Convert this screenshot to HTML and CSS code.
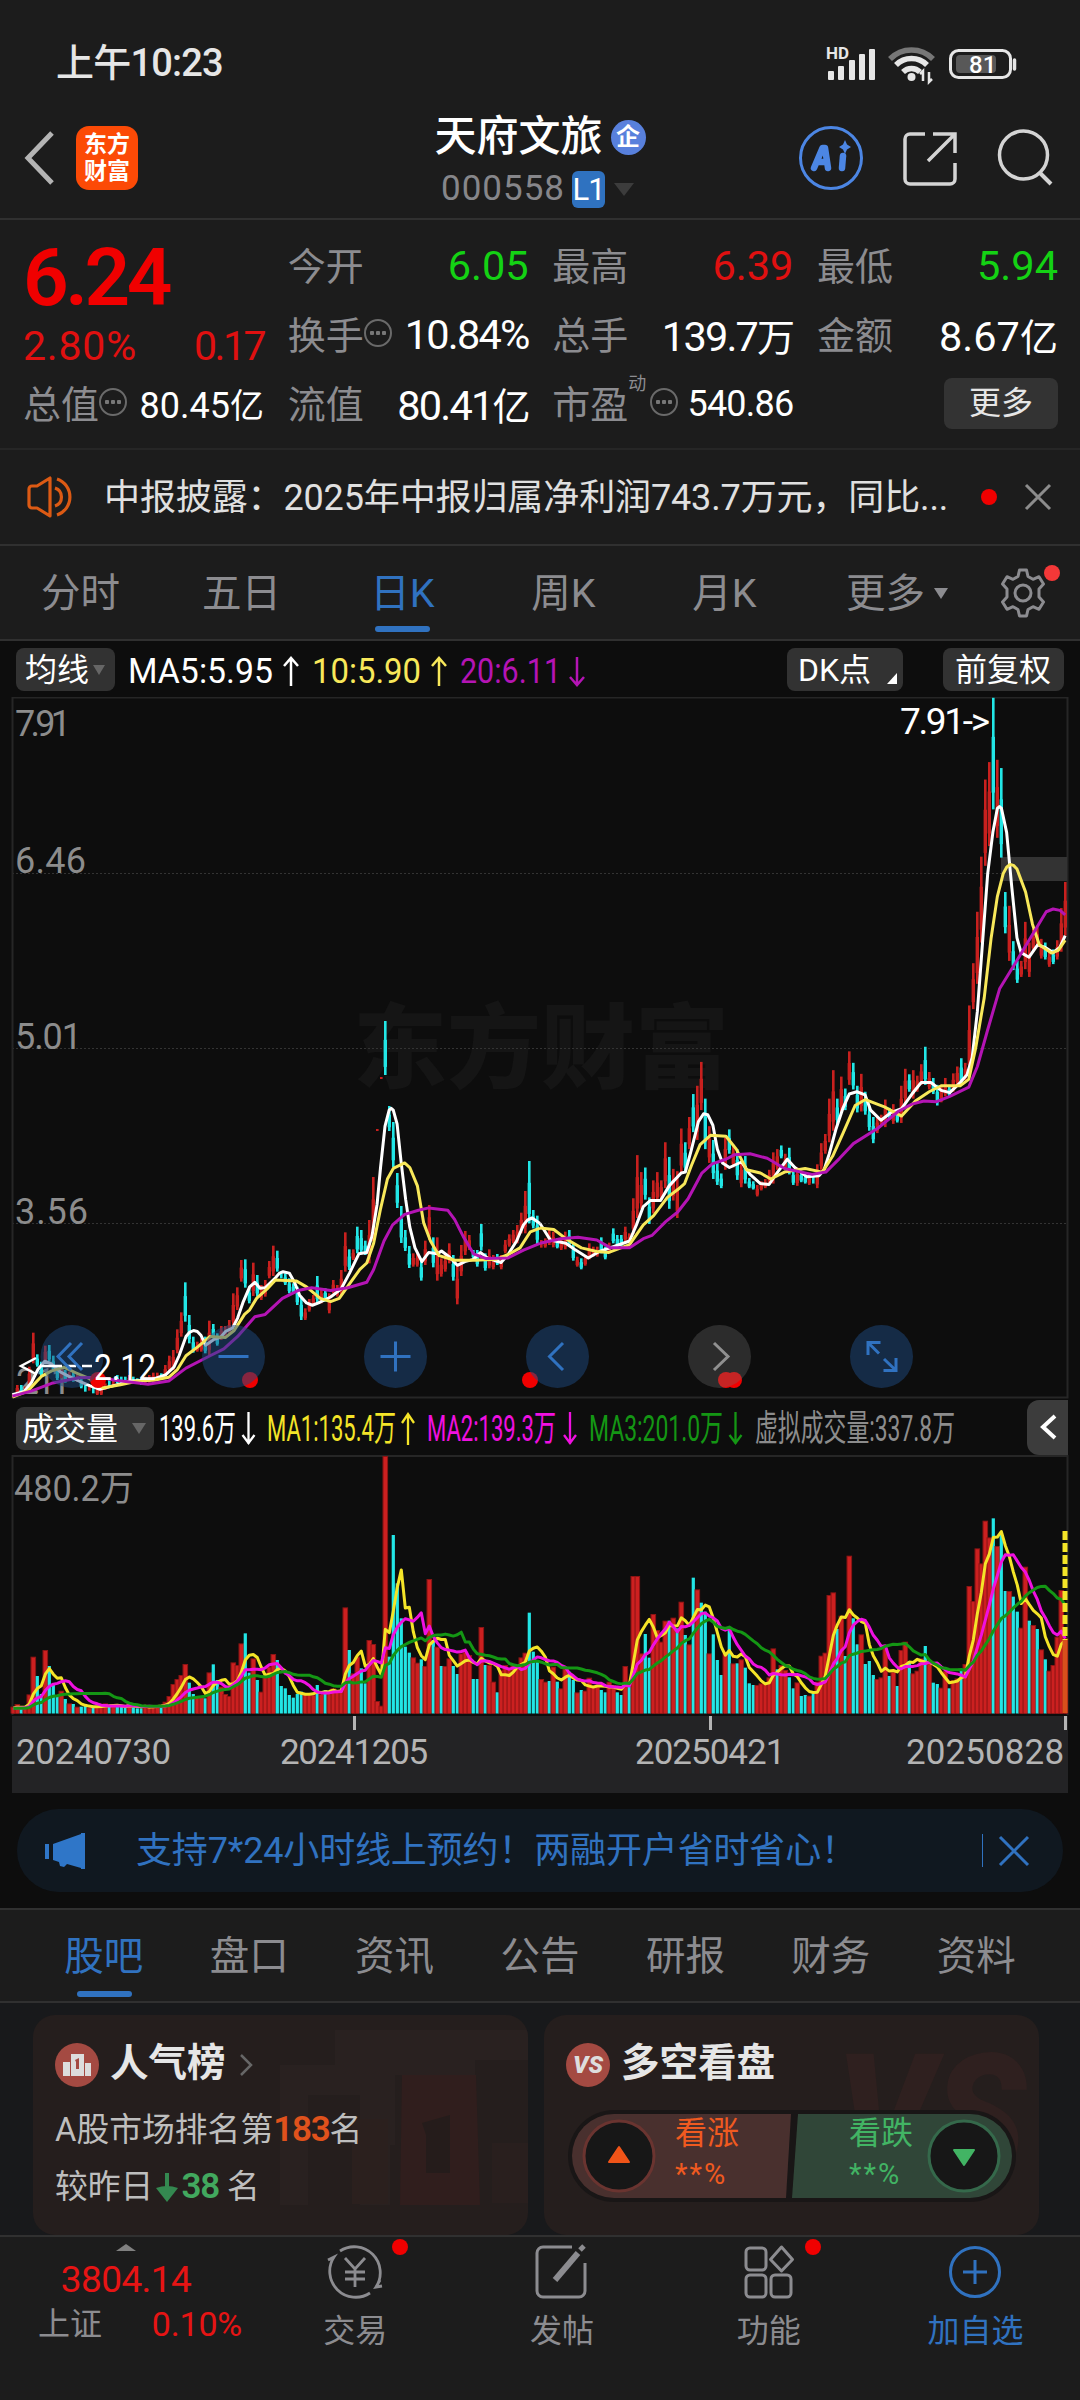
FILE: index.html
```html
<!DOCTYPE html>
<html lang="zh-CN">
<head>
<meta charset="utf-8">
<title>天府文旅 000558</title>
<link rel="stylesheet" href="styles.css">
</head>
<body>
<div class="app">
  <div class="status">
    <span class="clock">上午10:23</span>
    <svg class="status-icons" width="200" height="50" viewBox="0 0 200 50">
      <text x="2" y="18" class="hd" textLength="23" lengthAdjust="spacingAndGlyphs">HD</text>
      <g fill="#e6e6e6"><rect x="4" y="30" width="6" height="9" rx="1"/><rect x="14" y="25" width="6" height="14" rx="1"/><rect x="25" y="19" width="6" height="20" rx="1"/><rect x="35" y="13" width="6" height="26" rx="1"/><rect x="45" y="8" width="6" height="31" rx="1"/></g>
      <g fill="none" stroke="#e6e6e6" stroke-width="5.5"><path d="M66 18a30 30 0 0 1 43 0" stroke="#777"/><path d="M72 24a22 22 0 0 1 31 0"/><path d="M79 31a12 12 0 0 1 17 0"/></g>
      <circle cx="87.500" cy="36" r="4" fill="#e6e6e6"/>
      <path d="M99 40V30l-3 3M105 31v10l3-3" stroke="#e6e6e6" stroke-width="2.500" fill="none"/>
      <rect x="126.500" y="9.500" width="60" height="27" rx="8" fill="none" stroke="#e6e6e6" stroke-width="3"/>
      <rect x="132" y="14" width="40" height="18" rx="4" fill="#585858"/>
      <path d="M190.500 19v9" stroke="#e6e6e6" stroke-width="3.500" stroke-linecap="round"/>
      <text x="145" y="32" class="batt">81</text>
    </svg>
  </div>

  <header class="header">
    <div class="head-left">
      <svg width="40" height="60" viewBox="0 0 40 60"><path d="M31 5 7 30l24 25" fill="none" stroke="#b4b4b4" stroke-width="5"/></svg>
      <div class="logo"><span>东方</span><span>财富</span></div>
    </div>
    <div class="head-mid">
      <div class="name">天府文旅<span class="qi">企</span></div>
      <div class="code">000558<span class="lv">L1</span><i class="tri"></i></div>
    </div>
    <div class="head-right">
      <svg width="260" height="68" viewBox="0 0 260 68" fill="none">
        <circle cx="34" cy="34" r="30.500" stroke="#4c86e4" stroke-width="3"/>
        <path d="M17 44 25.500 24h2.500L31 44M20 38h10" stroke="#4c86e4" stroke-width="6.500" stroke-linejoin="round" stroke-linecap="round"/>
        <path d="M46 32 45 44" stroke="#4c86e4" stroke-width="6.500" stroke-linecap="round"/>
        <path d="m48 16 2 4.500L54 23l-4 2.500-2 4.500-2-4.500L42 23l4-2.500z" fill="#4c86e4"/>
        <path d="M128 10h-15a5 5 0 0 0-5 5v40a5 5 0 0 0 5 5h40a5 5 0 0 0 5-5V39M136 10h22v19M157 11 131 37" stroke="#d4d4d4" stroke-width="3.500"/>
        <circle cx="226.500" cy="31" r="24" stroke="#d4d4d4" stroke-width="3.500"/><path d="m242 48 12 12" stroke="#d4d4d4" stroke-width="4"/>
      </svg>
    </div>
  </header>

  <section class="quote">
    <div class="q-main">
      <div class="price">6.24</div>
      <div class="change"><span class="pct">2.80%</span><span class="abs">0.17</span></div>
    </div>
    <div class="q"><label>今开</label><b class="dn">6.05</b></div>
    <div class="q"><label>最高</label><b class="up">6.39</b></div>
    <div class="q"><label>最低</label><b class="dn">5.94</b></div>
    <div class="q"><label>换手<i class="more-dot"></i></label><b class="tight">10.84%</b></div>
    <div class="q"><label>总手</label><b class="tight">139.7<em>万</em></b></div>
    <div class="q"><label>金额</label><b>8.67<em>亿</em></b></div>
    <div class="q"><label>总值<i class="more-dot"></i></label><b class="sm">80.45<em>亿</em></b></div>
    <div class="q"><label>流值</label><b class="tight">80.41<em>亿</em></b></div>
    <div class="q"><label>市盈<sup>动</sup><i class="more-dot"></i></label><b class="sm pe">540.86</b></div>
    <div class="q end"><span class="btn-more">更多</span></div>
  </section>

  <section class="news">
    <svg width="50" height="44" viewBox="0 0 50 44" fill="none" stroke="#dc5a14" stroke-width="3.200" stroke-linejoin="round"><path d="M23 3v38L10 33H5a3 3 0 0 1-3-3V14a3 3 0 0 1 3-3h5z"/><path d="M28 13a9.500 9.500 0 0 1 0 18M30 4a19 19 0 0 1 0 36"/></svg>
    <p>中报披露：2025年中报归属净利润743.7万元，同比...</p>
    <i class="dot"></i>
    <svg width="28" height="28" viewBox="0 0 28 28"><path d="m2 2 24 24M26 2 2 26" stroke="#8c8c8c" stroke-width="3"/></svg>
  </section>

  <nav class="periods">
    <span>分时</span><span>五日</span><span class="on">日K</span><span>周K</span><span>月K</span><span>更多<i></i></span>
    <div class="gear">
      <svg width="50" height="50" viewBox="0 0 50 50" fill="none" stroke="#8c8c90" stroke-width="3"><path d="M21.500 2h7l1.500 6.500 5 2.800 6-2.600 4.500 7.300-4.500 5v8l4.500 5-4.500 7.300-6-2.600-5 2.800-1.500 6.500h-7L20 41.500l-5-2.800-6 2.600L4.500 34 9 29v-8l-4.500-5L9 8.700l6 2.600 5-2.800z" stroke-linejoin="round"/><circle cx="25" cy="25" r="8"/></svg>
      <i class="badge"></i>
    </div>
  </nav>

  <section class="chart">
    <div class="ma-row">
      <span class="chip">均线<i class="tri"></i></span>
      <svg class="ma-vals" width="480" height="44" viewBox="0 0 480 44">
        <g font-size="35"><text x="0" y="35" fill="#fff" textLength="145" lengthAdjust="spacingAndGlyphs">MA5:5.95</text>
        <text x="184" y="35" fill="#f8e85a" textLength="109" lengthAdjust="spacingAndGlyphs">10:5.90</text>
        <text x="332" y="35" fill="#b414b4" textLength="101" lengthAdjust="spacingAndGlyphs">20:6.11</text></g>
        <g fill="none" stroke-width="2.500"><path d="M163 38V10m-7 8 7-8 7 8" stroke="#fff"/><path d="M311 38V10m-7 8 7-8 7 8" stroke="#f8e85a"/><path d="M449 9v28m-7-8 7 8 7-8" stroke="#b414b4"/></g>
      </svg>
      <span class="chip dk">DK点<i></i></span>
      <span class="chip fq">前复权</span>
    </div>

    <svg id="kline" width="1080" height="702" viewBox="0 697 1080 702">
      <text class="water" x="353" y="1081" textLength="376" lengthAdjust="spacingAndGlyphs">东方财富</text>
      <g stroke="#333" stroke-dasharray="2 2"><path d="M12 873.500H1067M12 1048.500H1067M12 1223.500H1067"/></g>
      <path d="M12.500 697.500H1067.500V1397.500H12.500z" fill="none" stroke="#262626" stroke-width="2"/>
      <rect x="1001" y="857" width="66" height="24" fill="#333"/>
      <g class="axis"><text x="15" y="736" textLength="56">7.91</text><text x="15" y="873" textLength="71">6.46</text><text x="15" y="1049" textLength="67">5.01</text><text x="15" y="1224" textLength="73">3.56</text><text x="16" y="1394" textLength="55">2.11</text></g>
      <g id="candles"></g>
      <g class="line" transform="translate(0 690) scale(.34438 .45914)">
        <polyline stroke="#fff" points="36,1535 70,1528 90,1510 110,1480 130,1462 150,1468 175,1485 200,1495 230,1505 260,1515 290,1523 330,1515 380,1505 440,1502 480,1492 505,1475 520,1450 540,1408 550,1399 562,1395 573,1397 584,1406 597,1427 620,1415 640,1410 655,1397 675,1390 690,1368 705,1335 725,1300 740,1290 755,1303 770,1302 800,1280 812,1270 822,1267 840,1270 855,1290 870,1318 890,1335 907,1340 925,1335 960,1322 990,1305 1015,1270 1042,1228 1065,1225 1080,1190 1095,1120 1105,1040 1118,950 1130,915 1136,911 1142,915 1153,945 1165,1030 1178,1110 1190,1170 1205,1215 1225,1245 1245,1225 1270,1228 1282,1222 1305,1235 1328,1253 1350,1245 1375,1240 1395,1225 1415,1237 1455,1247 1475,1230 1500,1200 1520,1165 1532,1154 1545,1150 1568,1162"/>
        <polyline stroke="#f8e85a" points="36,1540 80,1527 120,1495 150,1483 185,1475 220,1487 260,1500 300,1520 350,1513 400,1505 450,1503 490,1497 515,1480 540,1450 575,1430 610,1408 655,1410 680,1395 710,1360 725,1350 745,1325 775,1305 800,1285 860,1287 890,1300 930,1325 960,1332 985,1325 1020,1288 1045,1262 1065,1248 1085,1205 1105,1130 1125,1065 1142,1042 1175,1030 1190,1040 1212,1080 1230,1160 1250,1200 1275,1232 1320,1242 1380,1242 1440,1240 1480,1228 1510,1215 1540,1180 1568,1172"/>
        <polyline stroke="#b414b4" points="36,1538 90,1527 150,1510 230,1498 290,1497 330,1503 430,1512 490,1505 540,1477 610,1450 650,1435 690,1408 740,1365 770,1360 820,1325 865,1308 905,1302 960,1308 1010,1302 1065,1290 1085,1262 1115,1200 1140,1165 1175,1142 1215,1133 1245,1128 1300,1133 1320,1153 1345,1190 1375,1228 1410,1238 1475,1237 1520,1220 1568,1205"/>
      </g>
      <g class="line" transform="translate(540 690) scale(.34438 .45914)">
        <polyline stroke="#fff" points="0,1162 30,1198 75,1205 100,1218 140,1237 175,1222 215,1212 260,1200 280,1165 300,1125 320,1112 350,1112 375,1080 410,1052 422,1050 440,1000 460,940 475,923 487,925 502,948 515,1000 530,1030 550,1040 585,1028 610,1055 640,1075 665,1077 690,1050 718,1022 740,1040 775,1060 810,1058 825,1045 840,1010 860,955 880,910 898,880 920,875 944,882 960,915 990,937 1020,920 1050,912 1080,880 1107,855 1135,855 1165,872 1190,877 1220,855 1240,838 1255,800 1270,700 1285,550 1300,400 1315,310 1328,258 1334,254 1340,258 1355,310 1370,430 1385,540 1397,572 1420,582 1445,555 1465,560 1490,572 1510,560 1525,535"/>
        <polyline stroke="#f8e85a" points="0,1172 40,1175 75,1195 120,1215 165,1223 200,1225 260,1208 300,1165 330,1145 370,1105 400,1088 420,1075 440,1035 465,990 495,970 540,972 570,1000 600,1045 640,1052 670,1065 710,1050 770,1042 820,1050 850,1015 880,965 915,905 945,892 1000,908 1050,928 1090,895 1130,875 1165,862 1220,862 1245,848 1265,780 1290,670 1310,540 1328,450 1345,400 1355,386 1365,380 1375,382 1385,390 1410,440 1430,510 1450,555 1485,573 1505,567 1525,545"/>
        <polyline stroke="#b414b4" points="0,1205 60,1195 110,1192 165,1198 205,1215 260,1215 300,1195 325,1188 365,1158 400,1137 430,1108 470,1052 500,1032 540,1022 565,1012 610,1010 660,1020 710,1042 790,1055 830,1050 870,1020 910,988 980,955 1040,918 1080,902 1115,895 1150,897 1190,885 1245,865 1270,820 1300,740 1335,650 1380,595 1420,545 1470,483 1490,477 1510,480 1525,490"/>
      </g>
      <g fill="#f00000"><circle cx="98" cy="1380" r="8"/><circle cx="250" cy="1380" r="8"/><circle cx="530" cy="1380" r="8"/><circle cx="726" cy="1380" r="8"/><circle cx="734" cy="1380" r="8"/></g>
      <g fill="#1e4a80" fill-opacity=".5"><circle cx="72" cy="1356.500" r="31.500"/><circle cx="233.500" cy="1356.500" r="31.500"/><circle cx="395.500" cy="1356.500" r="31.500"/><circle cx="557.500" cy="1356.500" r="31.500"/><circle cx="881.500" cy="1356.500" r="31.500"/></g>
      <circle cx="719.500" cy="1356.500" r="31.500" fill="#6e6e6e" fill-opacity=".33"/>
      <text class="mark" x="94" y="1380" textLength="62" lengthAdjust="spacingAndGlyphs">2.12</text>
      <path d="M36 1358 21 1366l15 8M42 1366H62M66 1366h10M82 1366h10" fill="none" stroke="#fff" stroke-width="2.500"/>
      <g fill="none" stroke="#3072c0" stroke-width="3"><path d="m71 1343-13 13.500 13 13.500M82 1343l-13 13.500 13 13.500M218.500 1356.500h30M380.500 1356.500h30M395.500 1341.500v30M563 1343l-13.500 13.500 13.500 13.500"/><path d="M868 1355v-12.500h12.500M868 1342.500l11 11M896 1358v12.500h-12.500M896 1370.500l-12-11.500"/></g>
      <path d="m714 1343 14 13.500-14 13.500" fill="none" stroke="#909090" stroke-width="3"/>
      <text class="mark" x="900" y="734" textLength="90">7.91-&gt;</text>
    </svg>

    <div class="vol-head">
      <span class="chip vol">成交量<i class="tri"></i></span>
      <svg width="800" height="50" viewBox="158 1402 800 50">
        <g font-size="36"><text x="159" y="1441" fill="#fff" textLength="77" lengthAdjust="spacingAndGlyphs">139.6万</text>
        <text x="267" y="1441" fill="#f4e428" textLength="129" lengthAdjust="spacingAndGlyphs">MA1:135.4万</text>
        <text x="427" y="1441" fill="#f010e0" textLength="129" lengthAdjust="spacingAndGlyphs">MA2:139.3万</text>
        <text x="589" y="1441" fill="#149614" textLength="134" lengthAdjust="spacingAndGlyphs">MA3:201.0万</text>
        <text x="755" y="1441" fill="#8c8c8c" textLength="200" lengthAdjust="spacingAndGlyphs">虚拟成交量:337.8万</text></g>
        <g fill="none" stroke-width="2.300"><path d="M248.500 1412v32m-6-9 6 8 6-8" stroke="#fff"/><path d="M408 1445v-31m-6 9 6-9 6 9" stroke="#f4e428"/><path d="M570 1412v32m-6-9 6 8 6-8" stroke="#f010e0"/><path d="M735.500 1412v32m-6-9 6 8 6-8" stroke="#149614"/></g>
      </svg>
      <span class="fold"><svg width="20" height="28" viewBox="0 0 20 28"><path d="M16 3 4 14l12 11" fill="none" stroke="#fff" stroke-width="4"/></svg></span>
    </div>

    <svg id="volume" width="1080" height="260" viewBox="0 1455 1080 260">
      <path d="M12.500 1715V1456H1067.500V1715" fill="none" stroke="#262626" stroke-width="2"/>
      <text class="axis" x="14" y="1501" textLength="120" lengthAdjust="spacingAndGlyphs">480.2万</text>
      <g id="bars"></g><g id="vma" class="line"></g>
      <path d="M1065 1531V1640" stroke="#f4e428" stroke-width="5" stroke-dasharray="9 3"/>
      <path d="M1065 1640V1713" stroke="#d8501c" stroke-width="5"/>
    </svg>
    <div class="dates"><span>20240730</span><span>20241205</span><span>20250421</span><span>20250828</span></div>
  </section>

  <div class="promo">
    <svg width="46" height="40" viewBox="0 0 46 40" fill="#2f76c8"><path d="M3 13h4v15H3zM11 13 39 3V2h4v36h-4v-1l-14-4-3 3-4-1-1-4-6-2z"/></svg>
    <p>支持7*24小时线上预约！两融开户省时省心！</p>
    <i></i>
    <svg width="32" height="32" viewBox="0 0 32 32"><path d="m2 2 28 28M30 2 2 30" stroke="#3072c0" stroke-width="3"/></svg>
  </div>

  <nav class="tabs"><span class="on">股吧</span><span>盘口</span><span>资讯</span><span>公告</span><span>研报</span><span>财务</span><span>资料</span></nav>

  <section class="cards">
    <article class="card">
      <svg class="deco" width="248" height="190" viewBox="0 0 248 190"><path d="M0 40h55v-35h193v30H110v145H80V70H28v110H0zM90 20h105v30h-80v70H90z" fill="#292120"/><path d="M72 94h36v85H72z" fill="#2b201e"/><path d="M122 50h74l4 130h-80z" fill="#301e1d"/><path d="M212 118h36v60h-36z" fill="#291f1e"/><path d="m142 98 28-8v58h-24v-38z" fill="#251c1b"/></svg>
      <h3><svg width="44" height="44" viewBox="0 0 44 44"><circle cx="22" cy="22" r="22" fill="#a44a42"/><path d="M8 19h7v14H8zM16 11h13v22H16zM30 20h6v13h-6z" fill="#ddd"/><path d="m20 17 4-2v11h-3v-7z" fill="#a44a42"/></svg><span>人气榜</span><svg width="16" height="24" viewBox="0 0 16 24"><path d="m3 2 10 10L3 22" fill="none" stroke="#666" stroke-width="2.500"/></svg></h3>
      <p>A股市场排名第<b class="hot">183</b>名</p>
      <p>较昨日<svg width="24" height="32" viewBox="0 0 24 32"><path d="M12 2v20" stroke="#348850" stroke-width="4"/><path d="M1 17q11-4 22 0L12 31z" fill="#348850"/></svg><b class="cool">38</b> 名</p>
    </article>
    <article class="card">
      <svg class="deco" width="248" height="190" viewBox="0 0 248 190"><text x="45" y="150" class="vs-bg" textLength="190" lengthAdjust="spacingAndGlyphs">VS</text></svg>
      <h3><span class="vs">VS</span><span>多空看盘</span></h3>
      <div class="battle">
        <svg width="450" height="94" viewBox="0 0 450 94">
          <rect x="1" y="1" width="448" height="92" rx="46" fill="#191616"/>
          <path d="M47 5H224L219 89H47a42 42 0 0 1 0-84z" fill="#49302e"/><path d="M231 5H403a42 42 0 0 1 0 84H225z" fill="#304638"/>
          <circle cx="52" cy="47" r="35" fill="#171717" stroke="#6a3430" stroke-width="3"/><circle cx="397" cy="47" r="35" fill="#171717" stroke="#35694b" stroke-width="3"/>
          <path d="m52 38 10 15H42z" fill="#f05418" stroke="#f05418" stroke-width="2" stroke-linejoin="round"/><path d="m397 56-10-15h20z" fill="#42b464" stroke="#42b464" stroke-width="2" stroke-linejoin="round"/>
        </svg>
        <div class="side bull"><span>看涨</span><span>**%</span></div>
        <div class="side bear"><span>看跌</span><span>**%</span></div>
      </div>
    </article>
  </section>

  <footer class="bottom">
    <div class="index"><i></i><strong>3804.14</strong><p><span>上证</span><b>0.10%</b></p></div>
    <div class="act"><svg width="64" height="56" viewBox="0 0 64 56" fill="none" stroke="#8c8c90" stroke-width="2.800"><path d="M17 7A26 26 0 0 1 53 43l6-1M47 49A26 26 0 0 1 11 13l-6 3M22 14l10 11 10-11M32 25v18M22 28h20M22 35h20M57 36l-4 7"/></svg><span>交易</span><i class="badge"></i></div>
    <div class="act"><svg width="64" height="56" viewBox="0 0 64 56" fill="none" stroke="#8c8c90" stroke-width="3"><path d="M42 3H13a6 6 0 0 0-6 6v38a6 6 0 0 0 6 6h36a6 6 0 0 0 6-6V19"/><path d="M25 36 48 9" stroke-width="6"/><path d="m50 6 4-4" stroke-width="5"/></svg><span>发帖</span></div>
    <div class="act"><svg width="64" height="56" viewBox="0 0 64 56" fill="none" stroke="#8c8c90" stroke-width="3"><rect x="9" y="4" width="20" height="22" rx="4"/><rect x="9" y="31" width="20" height="22" rx="4"/><rect x="34" y="31" width="20" height="22" rx="4"/><path d="m44.500 3 11 12.500-11 11.500-11-11.500z" stroke-linejoin="round"/></svg><span>功能</span><i class="badge"></i></div>
    <div class="act add"><svg width="64" height="56" viewBox="0 0 64 56" fill="none" stroke="#3072c0" stroke-width="3"><circle cx="32" cy="28" r="24.500"/><path d="M20 28h24M32 16v24"/></svg><span>加自选</span></div>
  </footer>
</div>
<script src="chart.js"></script>
</body>
</html>
```
FILE: styles.css
```css
* { box-sizing: border-box; }
body { margin: 0; background: #1c1c1c; color: #fff; font-family: Roboto, "Noto Sans CJK SC", sans-serif; }
p, h3 { margin: 0; font-weight: 400; }
i, em { font-style: normal; }
svg { display: block; flex: none; }
.app { width: 1080px; height: 2400px; overflow: hidden; display: flex; flex-direction: column; }
.app > * { flex: none; }
.tri { border: 10px solid transparent; border-top: 13px solid #3c3c3c; border-bottom: 0; }

.status { height: 110px; padding: 38px 56px 0 56px; display: flex; justify-content: space-between; color: #e6e6e6; }
.clock { font-size: 38px; line-height: 50px; font-weight: 500; letter-spacing: -.8px; }
.status-icons { margin-top: 3px; }
.hd { font-size: 17px; font-weight: 700; fill: #e6e6e6; }
.batt { font-size: 24px; font-weight: 500; fill: #fff; }

.header { height: 110px; border-bottom: 2px solid #303030; display: grid; grid-template-columns: 350px 380px 350px; }
.head-left { display: flex; align-items: center; padding-left: 21px; gap: 15px; height: 96px; }
.logo { width: 62px; height: 64px; border-radius: 13px; background: #fc4a06; display: flex; flex-direction: column; align-items: center; justify-content: center; font-size: 23px; line-height: 27px; font-weight: 700; }
.head-mid { display: flex; flex-direction: column; align-items: center; padding-top: 3px; }
.name { font-size: 42px; line-height: 48px; font-weight: 500; display: flex; align-items: center; gap: 8px; }
.qi { width: 35px; height: 35px; border-radius: 50%; background: #5880dc; font-size: 24px; line-height: 34px; text-align: center; font-weight: 700; }
.code { color: #86868a; font-size: 35px; line-height: 40px; letter-spacing: 1px; display: flex; align-items: center; margin: 8px 5px 0 0; }
.lv { background: #2f72c0; color: #fff; width: 33px; height: 37px; border-radius: 6px; font-size: 31px; line-height: 37px; margin: 0 9px 0 7px; text-align: center; letter-spacing: -1px; }
.head-right { padding: 14px 0 0 67px; }

.quote { height: 230px; border-bottom: 2px solid #262626; padding: 11px 22px 0 23px; display: grid; grid-template-columns: repeat(4, 241px); grid-template-rows: 69px 69px 69px; justify-content: space-between; }
.q-main { grid-row: 1 / 3; color: #f00000; }
.price { font-size: 80px; line-height: 88px; font-weight: 600; letter-spacing: -3.500px; padding-top: 3px; }
.change { display: flex; justify-content: space-between; font-size: 41px; line-height: 46px; color: #e01010; padding-top: 1px; }
.pct { letter-spacing: .8px; }
.abs { letter-spacing: -2.500px; }
.q { display: flex; justify-content: space-between; align-items: center; white-space: nowrap; }
.q label { font-size: 38px; color: #8c8c90; display: flex; align-items: center; position: relative; top: -2px; }
.q b { font-weight: 400; font-size: 41.500px; }
.q em { font-size: 38px; }
.q b.tight { letter-spacing: -1.800px; }
.q b.sm { font-size: 36px; }
.q b.sm em { font-size: 34px; }
.q b.pe { letter-spacing: -.8px; }
.q .up { color: #e01010; }
.q .dn { color: #14d214; }
.q sup { font-size: 18px; line-height: 20px; align-self: flex-start; margin-right: -14px; }
.q.end { justify-content: flex-end; }
.more-dot { width: 28px; height: 28px; border: 2.500px solid #6a6a6a; border-radius: 50%; display: inline-block; background: radial-gradient(circle at 6px 12px, #777 2px, transparent 2.500px), radial-gradient(circle at 12px 12px, #777 2px, transparent 2.500px), radial-gradient(circle at 18px 12px, #777 2px, transparent 2.500px); }
.q sup + .more-dot { margin-left: 18px; }
.btn-more { width: 114px; height: 51px; border-radius: 8px; background: #333; font-size: 32px; line-height: 50px; text-align: center; color: #e6e6e6; }

.news { height: 96px; border-bottom: 2px solid #303030; display: flex; align-items: center; padding-left: 27px; }
.news p { font-size: 36px; line-height: 50px; color: #e0e0e0; width: 848px; margin: 2px 0 0 27px; white-space: nowrap; letter-spacing: -.12px; }
.dot { width: 16px; height: 16px; border-radius: 50%; background: #f00000; margin: 0 27px 0 29px; }

.periods { height: 95px; border-bottom: 2px solid #303030; display: flex; color: #8c8c90; font-size: 39.500px; }
.periods > span { width: 161px; text-align: center; line-height: 96px; position: relative; }
.periods .on, .tabs .on { color: #3072c0; }
.periods .on::after { content: ""; position: absolute; left: 53px; bottom: 7px; width: 55px; height: 6px; border-radius: 3px; background: #3072c0; }
.periods span i { position: absolute; left: 129px; top: 42px; border: 7px solid transparent; border-top: 11px solid #8c8c90; border-bottom: 0; }
.gear { padding: 22px 0 0 32px; position: relative; }
.badge { position: absolute; width: 16px; height: 16px; border-radius: 50%; background: #f00000; }
.gear .badge { left: 78px; top: 19px; background: #f43838; }

.chart { background: #0d0d0d; }
.ma-row { height: 56px; display: flex; padding: 7px 0 0 16px; }
.chip { height: 43px; border-radius: 8px; background: #323232; font-size: 32px; line-height: 42px; display: flex; align-items: center; padding-left: 9px; width: 99px; white-space: nowrap; }
.chip .tri { margin-left: 4px; border-width: 10px 6.500px 0; border-top-color: #666; }
.ma-vals { margin-left: 13px; }
.chip.dk { margin-left: 179px; width: 116px; padding-left: 11px; position: relative; }
.chip.dk i { position: absolute; right: 6px; bottom: 7px; border-left: 10px solid transparent; border-bottom: 11px solid #fff; }
.chip.fq { margin-left: 40px; width: 121px; padding-left: 12px; }
.axis { fill: #8c8c8c; font-size: 36px; }
.mark { fill: #fff; font-size: 37px; }
.water { fill: #151515; font-size: 92px; font-weight: 900; }
.line polyline { fill: none; stroke-width: 3px; vector-effect: non-scaling-stroke; stroke-linejoin: round; }
.vol-head { height: 56px; display: flex; padding-left: 16px; position: relative; }
.chip.vol { margin-top: 8px; width: 138px; padding-left: 6px; }
.chip.vol .tri { border-width: 11px 7px 0; margin-left: 14px; }
.vol-head > svg { margin: 3px 0 0 4px; }
.fold { position: absolute; right: 12px; top: 1px; width: 41px; height: 55px; background: #3c3c3c; border-radius: 12px 0 0 12px; padding: 13px 0 0 12px; }
.dates { margin: 1px 12px 0; height: 77px; background: #232325; color: #b4b4b4; font-size: 35px; line-height: 74px; letter-spacing: -.3px; display: grid; grid-template-columns: 264px 355px 271px 165px; background-image: linear-gradient(#b4b4b4, #b4b4b4), linear-gradient(#b4b4b4, #b4b4b4), linear-gradient(#b4b4b4, #b4b4b4); background-size: 3px 14px; background-position: 341px 0, 697px 0, 1052px 0; background-repeat: no-repeat; padding-left: 4px; }
.dates span:nth-child(2) { letter-spacing: -1.300px; }
.dates span:nth-child(3) { letter-spacing: -1px; }
.dates span:nth-child(4) { letter-spacing: .1px; }

.promo { background: #101820; border-radius: 42px; height: 83px; margin: 16px 17px; display: flex; align-items: center; padding-left: 25px; box-shadow: 0 0 0 60px #0d0d0d; clip-path: inset(-16px -17px -16px -17px); }
.promo p { font-size: 36px; color: #3072c0; width: 840px; margin-left: 48px; line-height: 50px; letter-spacing: -.15px; }
.promo > i { width: 1px; height: 33px; background: #3072c0; margin: 0 15px 0 6px; }

.tabs { height: 95px; border-top: 2px solid #303030; border-bottom: 2px solid #303030; padding: 0 31px; display: grid; grid-template-columns: repeat(7, 1fr); font-size: 39.500px; line-height: 94px; text-align: center; color: #8c8c90; }
.tabs .on { position: relative; }
.tabs .on::after { content: ""; position: absolute; left: 46px; bottom: 7px; width: 55px; height: 6px; border-radius: 3px; background: #3072c0; }

.cards { height: 232px; background: #18191b; padding: 12px 41px 0 33px; display: flex; justify-content: space-between; }
.card { width: 495px; height: 220px; border-radius: 22px; background: #251e1d; position: relative; padding: 27px 0 0 22px; overflow: hidden; }
.deco { position: absolute; right: 0; top: 10px; }
.vs-bg { font: italic 900 170px Roboto, sans-serif; fill: #2f201f; }
.card > *:not(.deco) { position: relative; }
.card h3 { display: flex; align-items: center; height: 46px; font-size: 38.500px; line-height: 44px; font-weight: 700; color: #e6e6e6; }
.card h3 span:not(.vs) { margin: -4px 12px 0 11px; }
.vs { width: 44px; height: 44px; border-radius: 50%; background: #a44a42; color: #ddd; font: italic 900 24px/44px Roboto, sans-serif; text-align: center; }
.card p { display: flex; align-items: center; font-size: 32.800px; line-height: 50px; height: 57px; color: #bebebe; white-space: pre; }
.card h3 + p { margin-top: 13px; }
.card p b { font-size: 35px; font-weight: 600; letter-spacing: -1.200px; }
.hot { color: #e0521c; }
.cool { color: #42a85e; }
.card p svg { margin: 0 2px; }
.battle { width: 450px; height: 94px; margin: 21px 0 0 1px; }
.side { position: absolute; top: 1px; font-size: 32px; line-height: 46px; display: flex; flex-direction: column; }
.side span + span { font-size: 29px; letter-spacing: 2px; line-height: 36px; }
.bull { left: 108px; color: #f05a20; }
.bear { left: 282px; color: #42b464; }

.bottom { height: 165px; border-top: 2px solid #303030; display: grid; grid-template-columns: 252px repeat(4, 206.700px); color: #8c8c90; font-size: 32px; }
.index { display: flex; flex-direction: column; align-items: center; padding-top: 7px; }
.index i { border: 10px solid transparent; border-top: 0; border-bottom: 7px solid #808080; }
.index strong { font-size: 37px; line-height: 42px; font-weight: 400; color: #e61414; letter-spacing: -.6px; margin-top: 8px; }
.index p { display: flex; justify-content: space-between; width: 204px; line-height: 46px; margin-left: 28px; }
.index b { font-weight: 400; font-size: 34px; color: #e61414; letter-spacing: -.2px; }
.act { display: flex; flex-direction: column; align-items: center; padding-top: 7px; position: relative; }
.act > span { line-height: 48px; margin-top: 7px; }
.act .badge { left: 140px; top: 2px; }
.add { color: #3072c0; }
```
FILE: chart.js
```js
// Each segment holds [top, bottom] pairs on its own vertical scale.
const segments = [
  { y0: 1200, k: 3, d: [582,592,555,580,555,578,560,578,500,560,398,490,463,500,485,530,437,490,435,485,467,515,500,540,500,535,510,548,515,540,515,545,520,545,530,565,555,575,555,572,560,580,560,585,555,585,550,570,540,560,540,560,525,550,530,552,530,550,525,550,530,550,535,552,535,555,530,550,525,548,518,545,518,540,520,540,495,530,467,515,450,510,388,460,337,410,247,365,345,430,410,458,425,455,415,455,410,460,362,465,372,415,400,437,378,420,378,415,360,405,280,380,262,330,180,245,178,263,260,310,188,288,225,290,255,300,240,290,183,235,137,228,152,215,215,235,220,255,235,280,250,280,260,315,290,360,325,360,297,335,285,315,228,310,265,310,265,305,280,340,240,280,255,290,210,285,97,215,148,210,148,180,80,160,90,160,122,165,60,190] },
  { y0: 0, k: 1, d: [1177,1241,1129,1131,1077,1079,1021,1075,1106,1131,1122,1167,1173,1208,1206,1243,1230,1251,1246,1268] },
  { y0: 1200, k: 3, d: [160,200,160,200,180,242,122,195,15,120,112,202,112,242,175,230,165,215,130,190,165,242,195,313,135,228,93,165,105,150,150,175,150,200,72,152,160,212,148,205,165,208,162,195,165,208,120,160,103,140,90,130,75,130,38,100,-27,100,-117,70,30,85,47,132,120,143,115,143,90,135,95,142,115,145,115,150,95,148,90,140,130,182,170,200,175,208,165,197,130,178,140,170,140,170,112,160,140,178,128,160,85,130,105,140,105,138,80,125,100,130] },
  { y0: 690, k: 2.178, d: [1107,1185,1013,1150,1050,1130,1040,1110,1105,1163,1068,1140,1050,1115,1068,1110,985,1085,1017,1130,1043,1112,1048,1150,955,1050,985,1050,930,1000,880,963,862,980,810,915,890,1000,950,1030,980,1065,1030,1078,1053,1085,975,1045,957,1010,990,1040,1000,1067,1025,1083,1015,1075,1063,1085,1070,1088,1078,1103,1070,1090,1065,1085,1045,1078,1007,1075,1000,1045,992,1020,1010,1045,997,1055,1045,1078,1040,1080,1048,1072,1055,1075,1055,1078,1058,1075,1033,1085,987,1045,967,1010,890,985,828,960,890,945,842,920,868,915,787,860,812,870,862,920,836,918,875,925,905,960,930,987,930,965,925,950,892,952,910,935,902,945,915,942,862,943,825,900,837,875,828,890,840,875,815,860,777,860,832,870,845,880,860,905,860,898,845,885,860,885,835,875,820,860,802,860,812,850,687,840,595,695,483,640,363,550,195,383,157,340,17,260,152,322,170,365,440,530,470,590,547,610,590,638,590,625,505,608,550,625,520,570,517,560,542,585,550,587,570,603,565,597,545,587,475,570,418,535] }
];

// Volume bar tops in thirds of a pixel below y = 1200; the baseline is 1540.
const vol = [1520,1512,1525,1522,1483,1370,1428,1482,1350,1398,1455,1490,1472,1497,1510,1512,1520,1520,1518,1522,1520,1522,1515,1510,1520,1515,1520,1520,1522,1508,1522,1525,1525,1515,1518,1518,1520,1520,1505,1488,1452,1437,1425,1392,1448,1482,1490,1488,1495,1417,1393,1440,1460,1482,1488,1387,1395,1330,1300,1418,1375,1440,1475,1425,1400,1362,1380,1458,1465,1485,1493,1482,1475,1480,1485,1485,1455,1482,1470,1480,1465,1475,1470,1222,1350,1420,1370,1405,1450,1320,1332,1503,1517,768,1370,1005,1150,1255,1340,1358,1372,1388,1378,1398,1137,1320,1340,1398,1398,1375,1398,1422,1360,1355,1365,1437,1437,1281,1395,1395,1445,1477,1410,1395,1405,1395,1400,1372,1358,1238,1355,1380,1437,1445,1443,1400,1445,1465,1405,1415,1440,1477,1470,1472,1433,1455,1460,1470,1477,1445,1455,1477,1485,1398,1460,1128,1128,1360,1302,1373,1242,1290,1325,1262,1262,1253,1285,1205,1305,1333,1133,1168,1208,1235,1360,1303,1380,1425,1360,1290,1390,1390,1378,1403,1450,1455,1455,1450,1448,1432,1345,1408,1395,1410,1432,1465,1447,1488,1485,1487,1480,1445,1367,1358,1185,1177,1287,1247,1368,1067,1255,1333,1303,1392,1383,1425,1437,1432,1345,1428,1415,1458,1350,1325,1383,1420,1412,1375,1338,1390,1448,1452,1463,1412,1465,1440,1435,1413,1392,1158,1203,1045,1090,962,1012,955,1038,1005,1173,1173,1190,1235,1283,1100,1262,1275,1287,1348,1378,1412,1395,1310,1170,1315];

const falling = new Set([2,6,7,9,10,11,13,15,17,18,20,24,26,27,28,30,31,32,37,44,45,48,50,51,58,59,61,66,67,68,69,70,71,72,76,78,84,87,88,94,95,96,97,98,99,102,105,107,110,111,115,116,118,121,129,130,131,134,136,139,140,142,147,148,151,152,154,158,159,164,166,168,170,172,173,175,176,177,179,181,183,184,185,191,194,195,197,198,200,206,208,210,211,213,214,215,219,221,224,228,230,231,234,237,245,247,248,250,251,254,256,258]);
// Days whose candle colour differs from the colour of the volume bar.
const flipped = new Set([43,86,93,107,111,117,134,150,154,166,172,191,192,254,256,260]);

const NS = "http://www.w3.org/2000/svg";
const RED = "#c8201e", CYAN = "#22e6e6";
const x = i => 13.3 + 4 * i;

function add(parent, tag, attrs) {
  const el = document.createElementNS(NS, tag);
  for (const k in attrs) el.setAttribute(k, attrs[k]);
  parent.appendChild(el);
}

const candles = document.getElementById("candles");
let n = 0;
for (const s of segments) {
  for (let j = 0; j < s.d.length; j += 2, n++) {
    const top = s.y0 + s.d[j] / s.k, bottom = s.y0 + s.d[j + 1] / s.k;
    const down = falling.has(n) !== flipped.has(n);
    const color = down ? CYAN : RED;
    add(candles, "rect", { x: x(n) - 1.3, y: top, width: 2.6, height: bottom - top, fill: color });
    if (bottom - top > 8) {
      const h = (bottom - top) * 0.5;
      add(candles, "rect", { x: x(n) - 1.7, y: top + (bottom - top) * 0.35, width: 3.4, height: h, fill: color });
    }
  }
}

const bars = document.getElementById("bars");
vol.forEach((v, i) => {
  const down = falling.has(i), top = 1200 + v / 3;
  if (down) {
    add(bars, "rect", { x: x(i) - 1.6, y: top, width: 3.2, height: 1713.5 - top, fill: CYAN });
  } else {
    add(bars, "rect", { x: x(i) - 2.8, y: top, width: 5.6, height: 1713.5 - top, fill: "#8c1414" });
    add(bars, "rect", { x: x(i) - 1.7, y: top + 1, width: 3.4, height: 1712.5 - top, fill: "#cc2020" });
  }
});

const vma = document.getElementById("vma");
[[5, "#f4e428"], [10, "#f010e0"], [20, "#149614"]].forEach(([len, color]) => {
  const pts = vol.map((_, i) => {
    let sum = 0;
    for (let k = i - len + 1; k <= i; k++) sum += k < 0 ? 1526 : vol[k];
    return x(i).toFixed(1) + "," + (1200 + sum / len / 3).toFixed(1);
  });
  add(vma, "polyline", { points: pts.join(" "), stroke: color });
});
```
